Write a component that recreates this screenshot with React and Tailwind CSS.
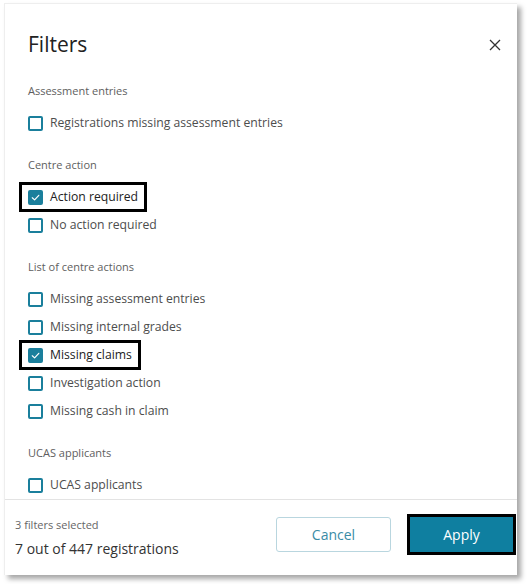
import React from "react";

function Box({ checked }) {
  return (
    <span
      className={
        "flex h-[15px] w-[15px] shrink-0 items-center justify-center rounded-[2px] border-2 border-[#1a7f9c] " +
        (checked ? "bg-[#1a7f9c]" : "bg-white")
      }
    >
      {checked && (
        <svg width="11" height="11" viewBox="0 0 12 12" fill="none">
          <path d="M2.5 6.3 L5 8.6 L9.6 3.6" stroke="white" strokeWidth="1.3" strokeLinecap="round" strokeLinejoin="round" />
        </svg>
      )}
    </span>
  );
}

function Item({ label, checked, highlight }) {
  if (highlight) {
    return (
      <div className="flex h-[28px] items-center">
        <div className="-ml-[9px] flex h-[30px] items-center gap-[7px] border-[3px] border-black pl-[6px] pr-[6px]">
          <Box checked={checked} />
          <span className="text-[12.2px] font-medium text-[#222]">{label}</span>
        </div>
      </div>
    );
  }
  return (
    <div className="flex h-[28px] items-center gap-[7px]">
      <Box checked={checked} />
      <span className="text-[12.2px] text-[#4d4d4d]">{label}</span>
    </div>
  );
}

function Section({ title, children, first }) {
  return (
    <div className={first ? "" : "mt-[18px]"}>
      <div className="mb-[8px] flex h-[20px] items-center text-[11px] text-[#5e5e5e]">{title}</div>
      {children}
    </div>
  );
}

export default function App() {
  return (
    <div className="h-[584px] w-[531px] overflow-hidden bg-white pl-[4px] pt-[3px]" style={{ fontFamily: '"Open Sans", "Noto Sans", sans-serif' }}>
      <div className="flex h-[572px] w-[513px] flex-col border-l border-t border-[#eeeeee] bg-white shadow-[4px_4px_5px_rgba(0,0,0,0.35)]">
        <div className="flex-1 overflow-hidden pl-[23px]">
          <div className="flex items-center justify-between pr-[16px] pt-[25px]">
            <h1 className="text-[21px] leading-[30px] text-[#222]">Filters</h1>
            <svg width="12" height="12" viewBox="0 0 12 12" className="mt-[1px]">
              <path d="M1 1 L11 11 M11 1 L1 11" stroke="#333" strokeWidth="1.3" />
            </svg>
          </div>
          <div className="mt-[22px]">
            <Section title="Assessment entries" first>
              <Item label="Registrations missing assessment entries" />
            </Section>
            <Section title="Centre action">
              <Item label="Action required" checked highlight />
              <Item label="No action required" />
            </Section>
            <Section title="List of centre actions">
              <Item label="Missing assessment entries" />
              <Item label="Missing internal grades" />
              <Item label="Missing claims" checked highlight />
              <Item label="Investigation action" />
              <Item label="Missing cash in claim" />
            </Section>
            <Section title="UCAS applicants">
              <Item label="UCAS applicants" />
            </Section>
          </div>
        </div>
        <div className="flex h-[76px] shrink-0 items-start justify-between border-t border-[#e3e3e3] pl-[10px] pr-[4px] pt-[17px]">
          <div className="flex flex-col">
            <span className="text-[11px] leading-[16px] text-[#666]">3 filters selected</span>
            <span className="mt-[6px] text-[14px] leading-[20px] text-[#333]">7 out of 447 registrations</span>
          </div>
          <div className="flex items-center">
            <button className="flex h-[35px] w-[115px] items-center justify-center rounded-[3px] border border-[#b9d6df] bg-white text-[14px] text-[#3a8ca6]">
              Cancel
            </button>
            <button className="ml-[19px] flex h-[35px] w-[103px] items-center justify-center bg-[#0f7fa0] text-[14px] text-white outline-[3px] outline-black outline-solid">
              Apply
            </button>
          </div>
        </div>
      </div>
    </div>
  );
}
